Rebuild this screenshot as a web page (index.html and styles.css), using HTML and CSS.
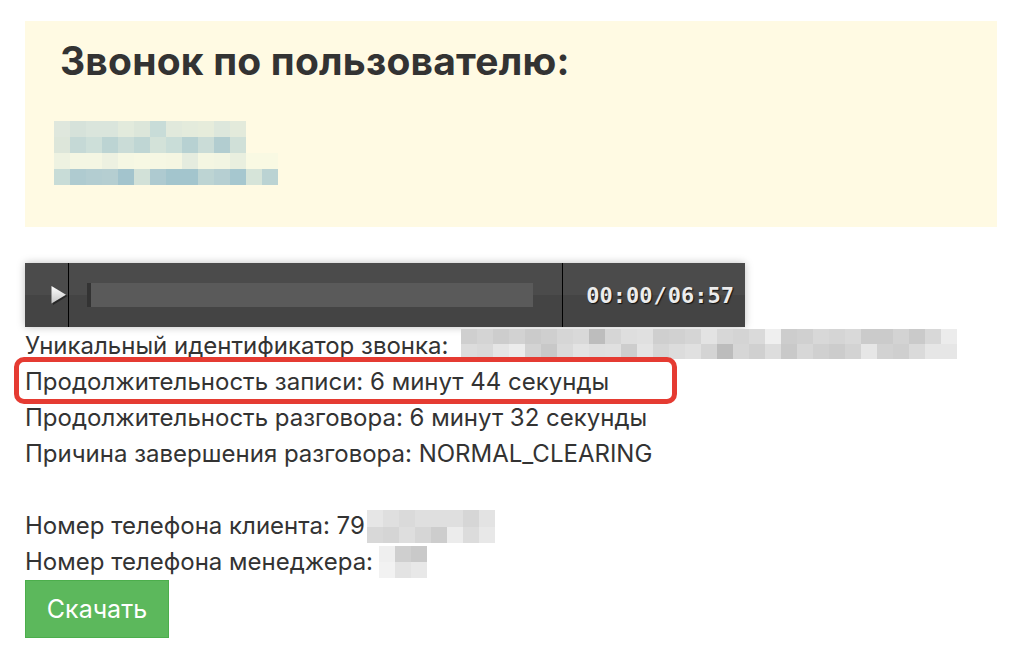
FILE: index.html
```html
<!DOCTYPE html>
<html lang="ru">
<head>
    <meta charset="UTF-8">
    <title>Звонок по пользователю</title>
    <link rel="stylesheet" href="styles.css">
</head>
<body>
<div class="page">
    <!-- Карточка пользователя -->
    <div class="userCard">
        <h2 class="userTitle">Звонок по пользователю:</h2>
        <div class="blurBox userBlur">
            <div class="blurRow u1"></div>
            <div class="blurRow u2"></div>
            <div class="blurRow u3"></div>
            <div class="blurRow u4"></div>
        </div>
    </div>

    <!-- Плеер записи -->
    <div class="player">
        <div class="playBtn">
            <svg width="19" height="21" viewBox="0 0 19 21">
                <defs>
                    <linearGradient id="playGrad" x1="0" y1="0" x2="0" y2="1">
                        <stop offset="0" stop-color="#ffffff"/>
                        <stop offset="1" stop-color="#c4c4c4"/>
                    </linearGradient>
                </defs>
                <polygon points="4,2.5 18.5,11 4,20" fill="#111" opacity="0.55"/>
                <polygon points="2.5,1 17,9.7 2.5,18.5" fill="url(#playGrad)"/>
            </svg>
        </div>
        <div class="track">
            <div class="progress"><span class="progressHead"></span></div>
        </div>
        <div class="time">00:00<span class="slash">/</span>06:57</div>
    </div>

    <!-- Информация о звонке -->
    <div class="callInfo">
        <div class="line">Уникальный идентификатор звонка: <span class="blurBox idBlur"><span class="blurRow i1"></span><span class="blurRow i2"></span></span></div>
        <div class="line highlighted">Продолжительность записи: 6 минут 44 секунды<span class="marker"></span></div>
        <div class="line">Продолжительность разговора: 6 минут 32 секунды</div>
        <div class="line">Причина завершения разговора: NORMAL_CLEARING</div>
        <div class="line empty"></div>
        <div class="line">Номер телефона клиента: 79<span class="blurBox phoneBlur"><span class="blurRow p1"></span><span class="blurRow p2"></span></span></div>
        <div class="line">Номер телефона менеджера:<span class="blurBox managerBlur"><span class="blurRow m1"></span><span class="blurRow m2"></span></span></div>
    </div>

    <button class="downloadBtn">Скачать</button>
</div>
</body>
</html>
```

FILE: styles.css
```css
/* Grundstil der Seite */
body {
    margin: 0;
    font-family: Inter, "Noto Sans", sans-serif;
    color: #333;
    background: #fff;
}

.page {
    padding: 21px 22px 0 25px;
}

/* Gelbe Karte oben */
.userCard {
    background-color: #fffae3;
    height: 206px;
    padding: 0 29px;
    box-sizing: border-box;
    overflow: hidden;
}

.userTitle {
    margin: 0;
    padding: 18px 0 0 6px;
    font-size: 39px;
    font-weight: 700;
    line-height: 44px;
    letter-spacing: 0.2px;
    color: #333;
}

/* Verpixelte Bereiche */
.blurBox {
    display: inline-block;
}

.blurRow {
    display: block;
    height: 16px;
}

.userBlur {
    display: block;
    margin-top: 38px;
}

.u1, .u2 { width: 192px; }
.u3, .u4 { width: 224px; }

.u1 {
    background: linear-gradient(90deg, #dfe7dd 0 16px, #d6e2da 16px 32px, #dae5dc 32px 64px, #e2eadc 64px 80px, #dce6da 80px 96px, #c8dcd8 96px 112px, #e1e9dc 112px 128px, #e4ebdc 128px 144px, #e6ecdb 144px 160px, #dde7dc 160px 176px, #e3eadb 176px 192px);
}
.u2 {
    background: linear-gradient(90deg, #dde6da 0 16px, #c5d9d6 16px 32px, #cddfd9 32px 48px, #bcd4d3 48px 64px, #cadcd7 64px 80px, #bfd6d4 80px 96px, #d3e2d9 96px 112px, #c9ddd8 112px 128px, #b7d1d2 128px 144px, #cadcd7 144px 160px, #b2cdd0 160px 176px, #d0e0d8 176px 192px);
}
.u3 {
    background: linear-gradient(90deg, #eef2e1 0 16px, #f4f6e3 16px 48px, #edf1e1 48px 64px, #f5f7e3 64px 80px, #f7f8e3 80px 96px, #f6f7e3 96px 112px, #f5f6e2 112px 128px, #e5ecdf 128px 144px, #f4f6e2 144px 160px, #f2f5e2 160px 176px, #e9efdf 176px 192px, #f9f9e3 192px 224px);
}
.u4 {
    background: linear-gradient(90deg, #c8dcd7 0 16px, #afcbd0 16px 32px, #b3cdd1 32px 48px, #b5ced1 48px 64px, #a3c4cd 64px 80px, #d2e1d8 80px 96px, #aecad0 96px 112px, #a3c5cd 112px 144px, #bdd4d3 144px 160px, #b6cfd2 160px 176px, #a6c7cf 176px 192px, #d6e4d9 192px 208px, #bbd3d3 208px 224px);
}

.idBlur {
    vertical-align: top;
    margin: 1px 0 0 6px;
}
.i1, .i2 { width: 496px; height: 15px; }
.i1 {
    background: linear-gradient(90deg, #cfcfcf 0 16px, #d4d4d4 16px 32px, #cdcdcd 32px 48px, #d2d2d2 48px 64px, #cbcbcb 64px 80px, #cfcfcf 80px 96px, #d6d6d6 96px 112px, #d9d9d9 112px 128px, #bdbdbd 128px 144px, #d6d6d6 144px 160px, #dedede 160px 176px, #e0e0e0 176px 192px, #cfcfcf 192px 208px, #d1d1d1 208px 224px, #d5d5d5 224px 240px, #e3e3e3 240px 256px, #d7d7d7 256px 272px, #d4d4d4 272px 288px, #dadada 288px 304px, #efefef 304px 320px, #cdcdcd 320px 336px, #d0d0d0 336px 352px, #d8d8d8 352px 368px, #d5d5d5 368px 384px, #d9d9d9 384px 400px, #cbcbcb 400px 432px, #d3d3d3 432px 448px, #cacaca 448px 464px, #d8d8d8 464px 480px, #ececec 480px 496px);
}
.i2 {
    background: linear-gradient(90deg, #dcdcdc 0 16px, #d9d9d9 16px 32px, #e5e5e5 32px 48px, #ececec 48px 64px, #d3d3d3 64px 80px, #c8c8c8 80px 96px, #dadada 96px 112px, #e3e3e3 112px 128px, #dfdfdf 128px 144px, #e0e0e0 144px 160px, #cdcdcd 160px 176px, #e4e4e4 176px 192px, #d6d6d6 192px 208px, #dcdcdc 208px 224px, #e0e0e0 224px 240px, #d4d4d4 240px 256px, #bcbcbc 256px 272px, #d6d6d6 272px 288px, #d0d0d0 288px 304px, #dddddd 304px 320px, #c9c9c9 320px 336px, #d7d7d7 336px 352px, #d0d0d0 352px 368px, #cccccc 368px 384px, #d3d3d3 384px 400px, #e6e6e6 400px 416px, #d2d2d2 416px 432px, #cfcfcf 432px 448px, #dadada 448px 464px, #e6e6e6 464px 496px);
}

.phoneBlur {
    vertical-align: top;
    margin: 2px 0 0 2px;
}
.p1, .p2 { width: 128px; height: 16.5px; }
.p1 {
    background: linear-gradient(90deg, #e6e6e6 0 16px, #dfdfdf 16px 32px, #dadada 32px 48px, #dfdfdf 48px 96px, #d6d6d6 96px 112px, #e3e3e3 112px 128px);
}
.p2 {
    background: linear-gradient(90deg, #d8d8d8 0 16px, #d5d5d5 16px 32px, #dedede 32px 48px, #d6d6d6 48px 64px, #cdcdcd 64px 80px, #ececec 80px 96px, #dcdcdc 96px 112px, #e8e8e8 112px 128px);
}

.managerBlur {
    vertical-align: top;
    margin: 2px 0 0 6px;
}
.m1, .m2 { width: 48px; }
.m1 {
    background: linear-gradient(90deg, #efefef 0 16px, #cfcfcf 16px 32px, #c9c9c9 32px 48px);
}
.m2 {
    background: linear-gradient(90deg, #f2f2f2 0 16px, #e3e3e3 16px 32px, #e8e8e8 32px 48px);
}

/* Audioplayer */
.player {
    display: flex;
    width: 720px;
    height: 64px;
    margin-top: 36px;
    background: linear-gradient(#4b4b4b 0 50%, #444 50% 100%);
    box-shadow: 0 0 8px rgba(0, 0, 0, 0.25);
}

.playBtn {
    width: 44px;
    border-right: 1px solid #000;
    display: flex;
    align-items: center;
    justify-content: flex-end;
    padding: 1px 0 0 0;
    box-sizing: border-box;
}

.track {
    flex: 1;
    display: flex;
    align-items: center;
    padding: 0 29px 0 18px;
}

.progress {
    flex: 1;
    height: 24px;
    background-color: #5a5a5a;
    display: flex;
}

.progressHead {
    width: 4px;
    background-color: #333;
}

.time {
    width: 183px;
    border-left: 1px solid #000;
    box-sizing: border-box;
    display: flex;
    align-items: center;
    justify-content: flex-end;
    padding-right: 11px;
    font-family: "DejaVu Sans Mono", "Liberation Mono", monospace;
    font-weight: 700;
    font-size: 22px;
    color: #ececec;
    text-shadow: 1px 1px 1px #111;
}

.slash {
    margin: 0 1px;
}

/* Informationszeilen */
.callInfo {
    margin-top: 1px;
}

.line {
    height: 36px;
    line-height: 36px;
    font-size: 24px;
    white-space: nowrap;
}

/* Rote Markierung über der Zeile */
.highlighted {
    position: relative;
}

.marker {
    position: absolute;
    z-index: 2;
    left: -11px;
    top: -7px;
    width: 663px;
    height: 47px;
    box-sizing: border-box;
    border: 5px solid #e53b32;
    border-radius: 10px;
}

/* Download-Knopf */
.downloadBtn {
    display: block;
    width: 144px;
    height: 58px;
    margin-top: 0;
    border: 1px solid #4cae4c;
    background-color: #5cb85c;
    color: #fff;
    font-family: Inter, "Noto Sans", sans-serif;
    font-size: 25px;
    cursor: pointer;
}
```
